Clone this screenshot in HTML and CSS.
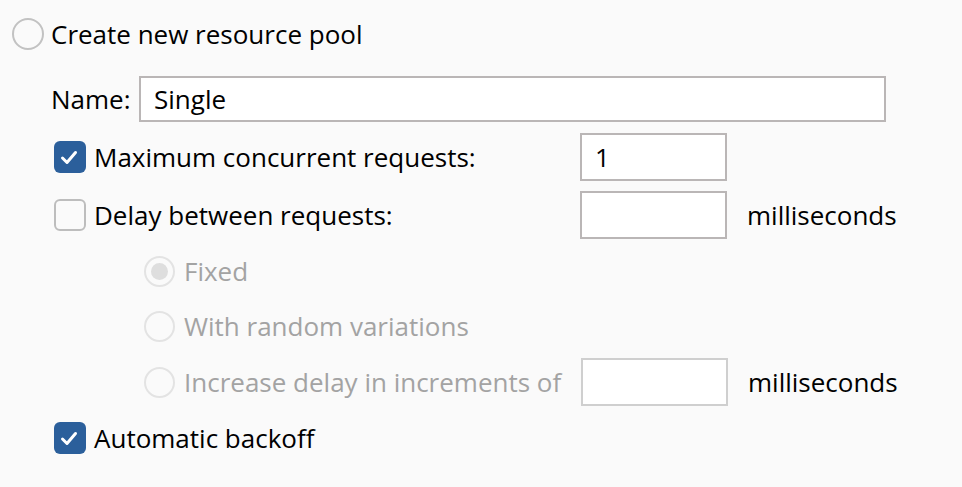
FILE: index.html
```html
<!DOCTYPE html>
<html>
<head>
<meta charset="utf-8">
<link rel="stylesheet" href="styles.css">
</head>
<body>
<div class="panel">
  <div class="row r-create">
    <span class="radio"></span>
    <span class="lbl">Create new resource pool</span>
  </div>
  <div class="row r-name">
    <span class="lbl name-lbl">Name:</span>
    <div class="input wide">Single</div>
  </div>
  <div class="row r-max">
    <span class="check on"><svg viewBox="0 0 32 32" width="32" height="32"><path d="M8.5 17 L13 21.5 L21.5 11.5" fill="none" stroke="#fff" stroke-width="3" stroke-linecap="round" stroke-linejoin="round"/></svg></span>
    <span class="lbl col-lbl">Maximum concurrent requests:</span>
    <div class="input num">1</div>
  </div>
  <div class="row r-delay">
    <span class="check"></span>
    <span class="lbl col-lbl">Delay between requests:</span>
    <div class="input num"></div>
    <span class="lbl unit">milliseconds</span>
  </div>
  <div class="row r-sub r-fixed">
    <span class="radio dis sel"></span>
    <span class="lbl dis-text">Fixed</span>
  </div>
  <div class="row r-sub r-rand">
    <span class="radio dis"></span>
    <span class="lbl dis-text">With random variations</span>
  </div>
  <div class="row r-sub r-inc">
    <span class="radio dis"></span>
    <span class="lbl dis-text sub-lbl">Increase delay in increments of</span>
    <div class="input num light"></div>
    <span class="lbl unit">milliseconds</span>
  </div>
  <div class="row r-auto">
    <span class="check on"><svg viewBox="0 0 32 32" width="32" height="32"><path d="M8.5 17 L13 21.5 L21.5 11.5" fill="none" stroke="#fff" stroke-width="3" stroke-linecap="round" stroke-linejoin="round"/></svg></span>
    <span class="lbl">Automatic backoff</span>
  </div>
</div>
</body>
</html>
```

FILE: styles.css
```css
html, body {
  margin: 0;
  padding: 0;
  background: #fafafa;
}
body {
  width: 962px;
  height: 487px;
  overflow: hidden;
  font-family: "Open Sans", "Noto Sans", sans-serif;
  font-size: 26px;
  color: #000;
}
.panel {
  display: flex;
  flex-direction: column;
  padding-top: 18px;
}
.row {
  display: flex;
  align-items: center;
  height: 48px;
}
.r-create { height: 32px; padding-left: 12px; }
.r-name { height: 46px; margin-top: 26px; padding-left: 52px; }
.r-max { margin-top: 11px; padding-left: 54px; }
.r-delay { margin-top: 10px; padding-left: 54px; }
.r-sub { padding-left: 144px; }
.r-fixed { margin-top: 8px; }
.r-rand { margin-top: 7px; }
.r-inc { margin-top: 8px; }
.r-auto { margin-top: 8px; padding-left: 54px; }

.lbl { white-space: nowrap; line-height: 1; }
.r-create .lbl { margin-left: 7px; }
.name-lbl { width: 88px; margin-left: -1px; }
.check + .lbl { margin-left: 8px; }
.col-lbl { width: 486px; }
.r-sub .radio + .lbl { margin-left: 9px; }
.sub-lbl { width: 397px; }
.unit { margin-left: 20px; }
.dis-text { color: #a3a3a3; }

.radio {
  box-sizing: border-box;
  width: 32px;
  height: 32px;
  border-radius: 50%;
  border: 2px solid #c2c2c2;
  background: #fafafa;
  flex: none;
  display: flex;
  align-items: center;
  justify-content: center;
}
.r-sub .radio { width: 31px; height: 31px; }
.radio.dis { border-color: #e3e3e3; }
.radio.sel::after {
  content: "";
  width: 17px;
  height: 17px;
  border-radius: 50%;
  background: #dedede;
}

.check {
  box-sizing: border-box;
  width: 32px;
  height: 32px;
  border-radius: 6px;
  border: 2px solid #bdbdbd;
  background: #fafafa;
  flex: none;
  display: flex;
}
.check.on {
  border: none;
  background: #2b5f9b;
}

.input {
  box-sizing: border-box;
  height: 48px;
  border: 2px solid #bab6b6;
  background: #fff;
  display: flex;
  align-items: center;
  padding-left: 13px;
  flex: none;
}
.wide { width: 747px; height: 46px; }
.num { width: 147px; }
.light { border-color: #cfcfcf; }
```
